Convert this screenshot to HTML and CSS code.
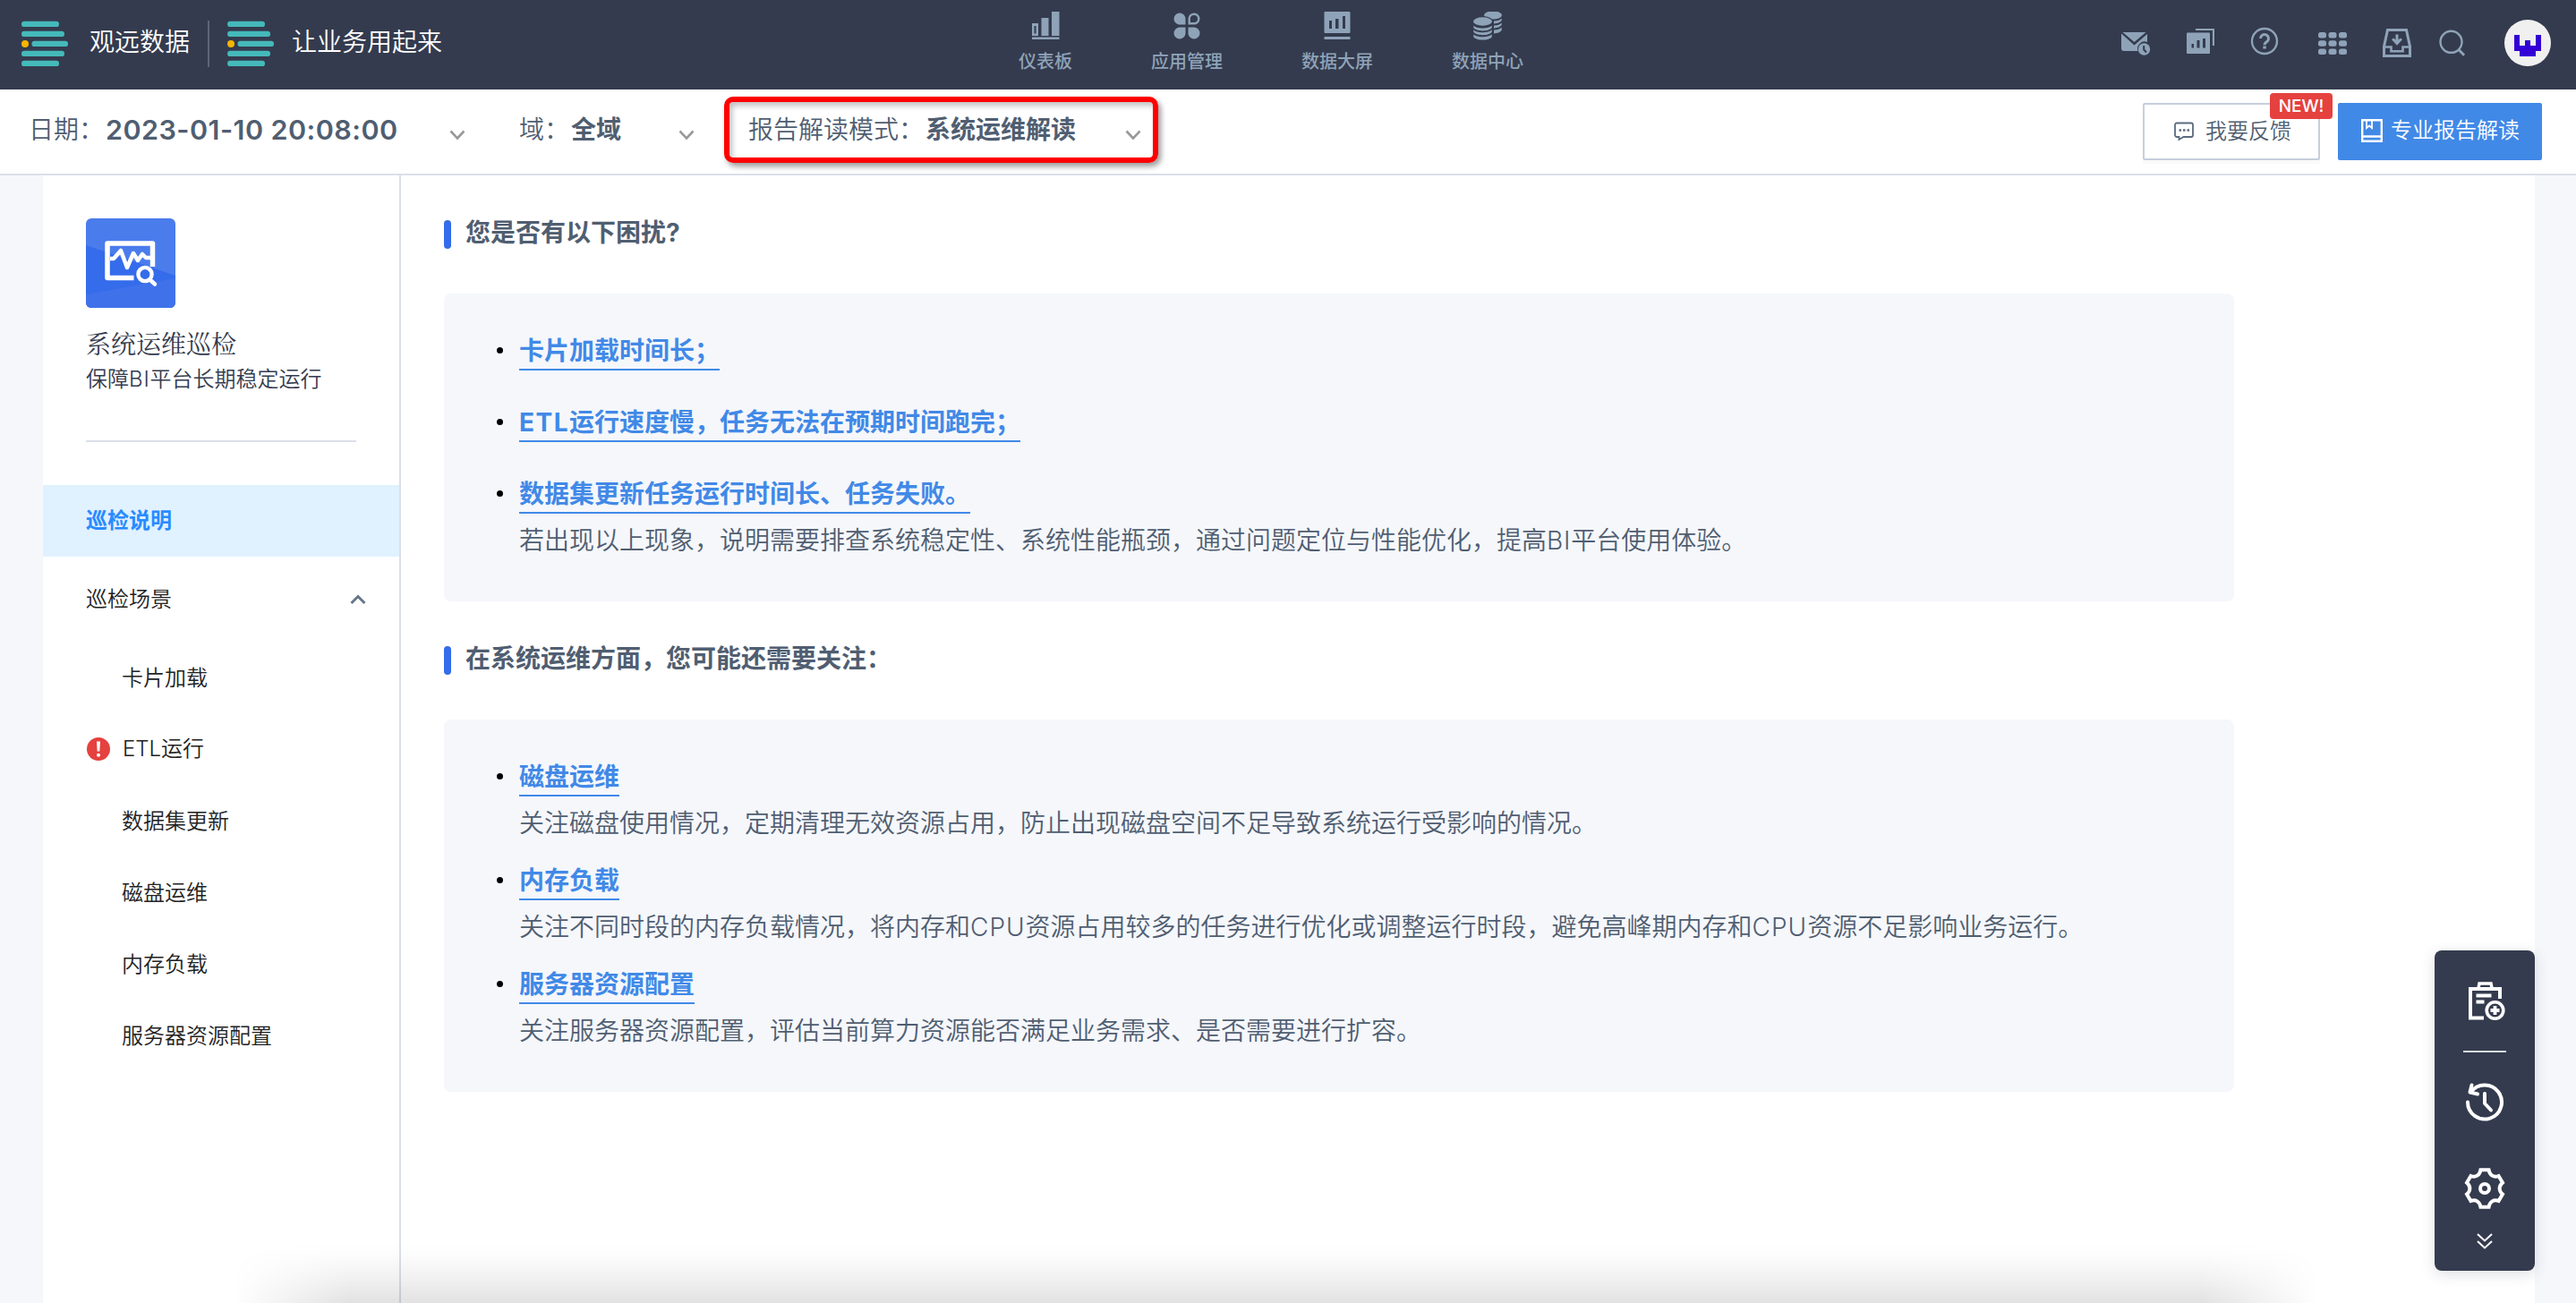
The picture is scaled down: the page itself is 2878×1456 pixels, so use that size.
FILE: index.html
```html
<!DOCTYPE html>
<html lang="zh-CN">
<head>
<meta charset="utf-8">
<title>系统运维巡检</title>
<link rel="stylesheet" href="styles.css">
</head>
<body>
<svg class="defs" width="0" height="0">
  <symbol id="logo" viewBox="0 0 52 52">
    <g fill="#45b9ba"><rect x="0" y="0.7" width="42" height="6.4" rx="3.2"/><rect x="0" y="11.7" width="48" height="6.4" rx="3.2"/><rect x="11.5" y="22.7" width="40.5" height="6.4" rx="3.2"/><rect x="0" y="33.7" width="48" height="6.4" rx="3.2"/><rect x="0" y="44.7" width="42" height="6.4" rx="3.2"/></g>
    <circle cx="4" cy="26" r="4" fill="#f7b500"/>
  </symbol>
  <symbol id="down" viewBox="0 0 18 12"><path d="M1.5 1.5 9 9.5 16.500 1.500" fill="none" stroke="#999" stroke-width="2.6"/></symbol>
</svg>

<header class="topbar">
  <div class="brand">
    <svg class="logo"><use href="#logo"/></svg>
    <span class="brand-name">观远数据</span>
    <i class="brand-line"></i>
    <svg class="logo"><use href="#logo"/></svg>
    <span class="slogan">让业务用起来</span>
  </div>
  <nav class="nav">
    <a class="nav-item">
      <svg width="32" height="32" viewBox="0 0 32 32" fill="#8fa3b8"><path fill-rule="evenodd" d="M1 13h7v14H1zM3.500 16v8.500h2V16z"/><path d="M11.500 7h8v20h-8zM23 0h8.500v27H23zM1 28.500h30.500v2.500H1z"/></svg>
      <span>仪表板</span></a>
    <a class="nav-item">
      <svg width="32" height="32" viewBox="0 0 32 32" fill="#8fa3b8"><path d="M14.500 14.500H7A6.500 6.500 0 1 1 14.500 7.500zM14.500 17.500v7A6.500 6.500 0 1 1 7.500 17.500zM17.500 17.500h7a6.500 6.500 0 1 1-7 7z"/><path d="M18.700 13.300V7.500a5.300 5.300 0 1 1 5.300 5.800z" fill="none" stroke="#8fa3b8" stroke-width="2.400"/></svg>
      <span>应用管理</span></a>
    <a class="nav-item">
      <svg width="32" height="32" viewBox="0 0 32 32" fill="#8fa3b8"><path fill-rule="evenodd" d="M2.500 0h27a1 1 0 0 1 1 1v22a1 1 0 0 1-1 1h-27a1 1 0 0 1-1-1V1a1 1 0 0 1 1-1zM7 10v9h3v-9zM14 8v11h3.500V8zM22 5v14h3V5z"/><path d="M1.500 28h29v3h-29z"/></svg>
      <span>数据大屏</span></a>
    <a class="nav-item">
      <svg width="32" height="32" viewBox="0 0 32 32" fill="#8fa3b8"><ellipse cx="22" cy="4" rx="10" ry="4.500"/><ellipse cx="10.500" cy="11" rx="11.500" ry="6" fill="#343b4e"/><ellipse cx="10.500" cy="11" rx="10.500" ry="4.700"/><path d="M.3 15.500c3 4 17 4 20.500 0v2.500c-3 4.500-17.500 4.500-20.500 0zM.3 20.300c3 4 17 4 20.500 0v2.500c-3 4.500-17.500 4.500-20.500 0zM.3 25.200c3 4 17 4 20.500 0v3c-3 4.500-17.500 4.500-20.500 0zM23 10.500q6 0 8.700-3v2.600q-2.500 3-8.700 3.500zM23 15.500q6 0 8.700-3v2.600q-2.500 3-8.700 3.500zM23 20.500q6 0 8.700-3v3.600q-2.500 3-8.700 3.500z"/></svg>
      <span>数据中心</span></a>
  </nav>
  <div class="tools">
    <svg class="t-mail" width="34" height="32" viewBox="0 0 34 32" fill="#8fa3b8"><path d="M2.500 3h26L15.500 14z"/><path d="M1 4.500 15.500 17.500 30 5v9a8 8 0 0 0-10.500 10H4a3 3 0 0 1-3-3z"/><circle cx="26.500" cy="22" r="6.700"/><path d="M26.200 18v4.500l2.800 3" fill="none" stroke="#343b4e" stroke-width="2"/></svg>
    <svg class="t-report" width="32" height="32" viewBox="0 0 32 32" fill="#8fa3b8"><path fill-rule="evenodd" d="M2 4.500h24a1 1 0 0 1 1 1V27a1 1 0 0 1-1 1H2a1 1 0 0 1-1-1V5.500a1 1 0 0 1 1-1zM6.500 17v4.500H9V17zM12.500 13v8.500h3V13zM19 11v10.500h3V11z"/><path d="M11 1h20v18" fill="none" stroke="#8fa3b8" stroke-width="2.200"/></svg>
    <svg class="t-help" width="32" height="32" viewBox="0 0 32 32" fill="none" stroke="#8fa3b8"><circle cx="16" cy="16" r="14" stroke-width="2.300"/><path d="M11.500 13a4.500 4.500 0 1 1 7.500 3.300q-3 2-3 4" stroke-width="3"/><path d="M14.300 21.500h3.500v3h-3.500z" fill="#8fa3b8" stroke="none"/></svg>
    <svg class="t-grid" width="32" height="26" viewBox="0 0 32 26" fill="#8fa3b8"><rect width="9" height="6.500" rx="2.500"/><rect x="11.500" width="9" height="6.500" rx="2.500"/><rect x="23" width="9" height="6.500" rx="2.500"/><rect y="9.200" width="9" height="6.500" rx="2.500"/><rect x="11.500" y="9.200" width="9" height="6.500" rx="2.500"/><rect x="23" y="9.200" width="9" height="6.500" rx="2.500"/><rect y="18.500" width="9" height="6.500" rx="2.500"/><rect x="11.500" y="18.500" width="9" height="6.500" rx="2.500"/><rect x="23" y="18.500" width="9" height="6.500" rx="2.500"/></svg>
    <svg class="t-inbox" width="32" height="32" viewBox="0 0 32 32" fill="none" stroke="#8fa3b8" stroke-width="3"><path d="M5.500 1.500h21L30.500 20v10.500h-29V20z"/><path d="M2 20.500h7.500v4.800h13v-4.800H30" stroke-width="2.600"/><path d="M16 6.500v9" /><path d="M10 12.300l6 6.400 6-6.400-2-1.800-4 3-4-3z" fill="#8fa3b8" stroke="none"/></svg>
    <svg class="t-search" width="30" height="30" viewBox="0 0 30 30" fill="none" stroke="#8fa3b8" stroke-width="2.400"><circle cx="13.500" cy="13.800" r="12"/><path d="M22 22.500l6 6.200" stroke-width="3"/></svg>
    <svg class="t-avatar" width="52" height="52" viewBox="0 0 52 52"><circle cx="26" cy="26" r="26" fill="#f0f0f0"/><path d="M11 17h6v12h6v-6h6v6h6V17h6v18h-6v6H17v-6h-6z" fill="#3400d6"/></svg>
  </div>
</header>

<section class="filters">
  <div class="filter f-date"><span>日期：</span><b class="date">2023-01-10 20:08:00</b><svg class="down"><use href="#down"/></svg></div>
  <div class="filter f-domain"><span>域：</span><b>全域</b><svg class="down"><use href="#down"/></svg></div>
  <div class="filter f-mode"><span>报告解读模式：</span><b>系统运维解读</b><svg class="down"><use href="#down"/></svg></div>
  <div class="actions">
    <button class="btn feedback">
      <svg width="22" height="22" viewBox="0 0 22 22" fill="none" stroke="#5b6b7f" stroke-width="1.800"><path d="M3 1.500h16a2 2 0 0 1 2 2V15a2 2 0 0 1-2 2h-8.500L5.500 20v-3H3a2 2 0 0 1-2-2V3.500a2 2 0 0 1 2-2z"/><path d="M5.500 9.500H8M10 9.500h2.500M14.500 9.500H17" stroke-width="2.500"/></svg>
      <span>我要反馈</span><em class="badge">NEW!</em></button>
    <button class="btn primary">
      <svg width="24" height="28" viewBox="0 0 24 28" fill="none" stroke="#fff" stroke-width="2.400"><path d="M1.200 2.200h21.600v23.600H1.200zM1.200 20.500h21.600"/><path d="M6 2.500v8.500l3-2.500 3 2.500V2.500" stroke-width="1.800"/></svg>
      <span>专业报告解读</span></button>
  </div>
</section>

<div class="page">
  <aside class="side">
    <svg class="app-icon" width="100" height="100" viewBox="0 0 100 100">
      <defs><clipPath id="r"><rect width="100" height="100" rx="6"/></clipPath></defs>
      <g clip-path="url(#r)"><rect width="100" height="100" fill="#4a7cec"/><path d="M0 30 100 64v36H0z" fill="#356ceb"/><path d="M0 85 100 67v33H0z" fill="#3f71ea"/></g>
      <g fill="none" stroke="#fff" stroke-linejoin="round"><path d="M74.500 54V28H24v38.500h29.500" stroke-width="5.500"/><path d="M27 45h4l8-9 7 19 7-16 5 8 5-7 4 4h5" stroke-width="4.500"/><circle cx="66" cy="62.500" r="7.600" stroke-width="4.300"/><path d="M72 69l5 4.500" stroke-width="4.500" stroke-linecap="round"/></g>
    </svg>
    <h1>系统运维巡检</h1>
    <p class="sub">保障<span class="bi">BI</span>平台长期稳定运行</p>
    <hr>
    <ul class="menu">
      <li class="active">巡检说明</li>
      <li class="group">巡检场景<svg width="18" height="12" viewBox="0 0 18 12"><path d="M1.500 10 9 2.500 16.500 10" fill="none" stroke="#66768a" stroke-width="3"/></svg></li>
      <li class="child">卡片加载</li>
      <li class="child warn"><svg width="26" height="26" viewBox="0 0 26 26"><circle cx="13" cy="13" r="13" fill="#e5413f"/><path d="M11 4.500h4l-.7 11h-2.600z" fill="#fff"/><circle cx="13" cy="19.800" r="2" fill="#fff"/></svg>ETL运行</li>
      <li class="child">数据集更新</li>
      <li class="child">磁盘运维</li>
      <li class="child">内存负载</li>
      <li class="child">服务器资源配置</li>
    </ul>
  </aside>
  <main class="content">
    <h2>您是否有以下困扰?</h2>
    <div class="panel loose">
      <ul>
        <li><a>卡片加载时间长；</a></li>
        <li><a><span class="etl">ETL</span>运行速度慢，任务无法在预期时间跑完；</a></li>
        <li><a>数据集更新任务运行时间长、任务失败。</a><p>若出现以上现象，说明需要排查系统稳定性、系统性能瓶颈，通过问题定位与性能优化，提高<span class="bi">BI</span>平台使用体验。</p></li>
      </ul>
    </div>
    <h2>在系统运维方面，您可能还需要关注：</h2>
    <div class="panel">
      <ul>
        <li><a>磁盘运维</a><p>关注磁盘使用情况，定期清理无效资源占用，防止出现磁盘空间不足导致系统运行受影响的情况。</p></li>
        <li><a>内存负载</a><p>关注不同时段的内存负载情况，将内存和<span class="latin">CPU</span>资源占用较多的任务进行优化或调整运行时段，避免高峰期内存和<span class="latin">CPU</span>资源不足影响业务运行。</p></li>
        <li><a>服务器资源配置</a><p>关注服务器资源配置，评估当前算力资源能否满足业务需求、是否需要进行扩容。</p></li>
      </ul>
    </div>
  </main>
</div>

<div class="bottom-shade"></div>
<div class="dock">
  <svg class="d-clip" width="42" height="46" viewBox="0 0 42 46" fill="none" stroke="#fff"><path d="M36 20V9H3v32.500h15" stroke-width="4"/><path d="M12 8l1-5h13l1 5" stroke-width="3.500"/><path d="M9.500 16.500h17M9.500 23.500h9" stroke-width="4"/><circle cx="30.500" cy="33" r="9.300" stroke-width="3.600"/><path d="M30.500 28v10M25.500 33h10" stroke-width="3.800"/></svg>
  <i class="dock-line"></i>
  <svg class="d-history" width="46" height="46" viewBox="0 0 46 46" fill="none" stroke="#fff" stroke-width="4" stroke-linecap="round" stroke-linejoin="round"><path d="M4 22.500A19 19 0 1 0 7.500 11.500"/><path d="M8.500 3.500 6.500 11.500l8.500 2" /><path d="M23 13v11l7 7.500"/></svg>
  <svg class="d-gear" width="46" height="48" viewBox="0 0 46 48" fill="none" stroke="#fff"><path d="M18.500 3.200h9c1 6 5.500 9 11 6.800l4.500 7.500c-4.500 4-4.500 9 0 13L38.500 38c-5.500-2.200-10 .8-11 6.800h-9c-1-6-5.500-9-11-6.800L3 30.500c4.500-4 4.500-9 0-13L7.500 10c5.500 2.200 10-.8 11-6.800z" stroke-width="4"/><circle cx="23" cy="24" r="5" stroke-width="4"/></svg>
  <svg class="d-more" width="18" height="20" viewBox="0 0 18 20" fill="none" stroke="#fff" stroke-width="2"><path d="M1 2l8 7.500L17 2M1 10l8 7.500 8-7.500"/></svg>
</div>
</body>
</html>
```

FILE: styles.css
```css
* { box-sizing: border-box; }
body {
  margin: 0;
  width: 2878px;
  height: 1456px;
  overflow: hidden;
  position: relative;
  display: flex;
  flex-direction: column;
  background: #f5f7fb;
  color: #505e71;
  font-family: Inter, "Noto Sans CJK SC", sans-serif;
}
svg { display: block; flex: none; }
.defs { position: absolute; }
h1, h2, p, ul { margin: 0; padding: 0; font-weight: 400; }
ul { list-style: none; }

.topbar {
  height: 100px;
  flex: none;
  background: #343b4e;
  display: grid;
  grid-template-columns: 1138px 1fr auto;
}
.brand { display: flex; align-items: center; padding: 0 0 4px 24px; color: #fff; font-size: 28px; font-weight: 350; line-height: 40px; }
.logo { width: 52px; height: 52px; }
.brand .logo { margin-top: 1px; }
.brand span { padding-bottom: 3px; }
.brand-name { margin-left: 24px; }
.brand-line { width: 2px; height: 52px; background: #5b6578; margin: 1px 20px 0; }
.slogan { margin-left: 20px; }
.nav { display: flex; gap: 88px; padding-top: 13px; }
.nav-item { display: flex; flex-direction: column; align-items: center; color: #8fa3b8; font-size: 20px; font-weight: 500; line-height: 28px; gap: 10px; }
.tools { display: flex; align-items: flex-start; padding-right: 28px; }
.t-mail { margin: 33px 39px 0 0; }
.t-report { margin: 32px 40px 0 0; }
.t-help { margin: 30px 44px 0 0; }
.t-grid { margin: 36px 40px 0 0; }
.t-inbox { margin: 32px 31px 0 0; }
.t-search { margin: 33px 43px 0 0; }
.t-avatar { margin-top: 22px; }

.filters {
  height: 96px;
  flex: none;
  background: #fff;
  border-bottom: 2px solid #dbdfe8;
  display: flex;
  align-items: flex-start;
  padding: 8px 38px 0 32px;
  font-size: 28px;
  line-height: 40px;
}
.filter { display: flex; align-items: center; height: 74px; white-space: nowrap; }
.filter > span { font-weight: 350; }
.filter b { font-weight: 700; }
.filter .down { width: 18px; height: 12px; margin: 11px 0 0 auto; }
.filter .date { font-size: 30.500px; font-weight: 600; letter-spacing: .45px; margin: -1px 0 0 2px; }
.f-date { width: 488px; }
.f-domain { width: 196px; margin-left: 60px; }
.f-domain b { margin-left: 2px; }
.f-mode {
  width: 485px;
  margin-left: 33px;
  padding: 0 13px 0 21px;
  border: 6px solid #fe0000;
  border-radius: 10px;
  box-shadow: 3px 4px 6px rgba(0,0,0,.4), inset 3px 4px 6px rgba(0,0,0,.25);
}
.f-mode b { margin-left: 2px; }
.actions { display: flex; gap: 20px; margin: 7px 0 0 auto; }
.btn {
  font: 350 24px/34px Inter, "Noto Sans CJK SC", sans-serif;
  height: 64px;
  display: flex;
  align-items: center;
  border-radius: 2px;
  position: relative;
  white-space: nowrap;
}
.feedback { width: 198px; padding: 0 0 0 33px; gap: 13px; border: 2px solid #c6cedb; background: #fff; color: #505e71; box-shadow: 0 4px 0 #fafafb; }
.badge { position: absolute; left: 140px; top: -13px; width: 70px; height: 29px; border-radius: 4px; background: #e5413f; color: #fff; font: 500 19px/29px Inter, sans-serif; text-align: center; }
.primary { width: 228px; padding: 0 0 2px 26px; gap: 9px; border: 0; background: #4189e7; color: #fff; }

.page { flex: 1; margin: 0 46px 0 48px; background: #fff; display: flex; }
.side { width: 400px; border-right: 2px solid #dbdfe8; padding-top: 48px; color: #343b4e; }
.app-icon { margin-left: 48px; }
.side h1 { font: 400 28px/40px "Noto Serif CJK SC", "Noto Serif SC", "Liberation Serif", "Noto Sans CJK SC", serif; margin: 19px 0 0 48px; }
.sub { font-size: 24px; font-weight: 350; line-height: 36px; margin: 3px 0 0 48px; }
.side hr { border: 0; height: 2px; background: #dbdfe8; margin: 50px 48px 48px; }
.menu { font-size: 24px; font-weight: 350; color: #222; line-height: 80px; }
.menu li { height: 80px; padding-left: 48px; }
.menu .active { background: #e0f1ff; color: #2a8bff; font-weight: 700; }
.menu .group { height: 96px; line-height: 96px; display: flex; justify-content: space-between; align-items: center; padding-right: 37px; }
.menu .child { padding-left: 88px; }
.menu .warn { display: flex; align-items: center; gap: 14px; padding: 0 0 2px 49px; }

.content { width: 2048px; padding: 39px 0 0 48px; }
h2 { height: 48px; display: flex; align-items: center; font-size: 28px; font-weight: 700; line-height: 40px; padding-top: 2px; }
h2::before { content: ""; width: 8px; height: 32px; border-radius: 4px; background: #356ceb; margin: 4px 16px 0 0; }
.panel { height: 416px; margin-top: 45px; background: #f5f7fb; border-radius: 8px; padding: 42px 0 0 84px; font-size: 28px; line-height: 40px; white-space: nowrap; }
.panel.loose { height: 344px; margin-bottom: 39px; }
.panel li { height: 116px; position: relative; }
.loose li { height: 80px; }
.panel li::before { content: ""; position: absolute; left: -25px; top: 18px; width: 7px; height: 7px; border-radius: 50%; background: #000; }
.panel a { display: inline-block; height: 44px; line-height: 45px; border-bottom: 2px solid #4189e7; color: #4189e7; font-weight: 700; vertical-align: top; }
.etl { letter-spacing: 1.500px; }
.latin { letter-spacing: 1px; }
.bi { letter-spacing: .8px; }
.panel p { font-weight: 350; margin-top: 10px; }

.bottom-shade {
  position: absolute;
  left: 260px;
  bottom: 0;
  width: 2330px;
  height: 66px;
  background: linear-gradient(to top, rgba(0,0,0,.115), rgba(0,0,0,.05) 45%, rgba(0,0,0,.01) 80%, transparent);
  -webkit-mask-image: linear-gradient(to right, transparent, #000 130px, #000 2200px, transparent);
  mask-image: linear-gradient(to right, transparent, #000 130px, #000 2200px, transparent);
}
.dock {
  position: absolute;
  left: 2720px;
  top: 1062px;
  width: 112px;
  height: 358px;
  border-radius: 8px;
  background: #343b4e;
  box-shadow: 0 4px 16px rgba(52,59,78,.16);
  display: flex;
  flex-direction: column;
  align-items: center;
}
.d-clip { margin: 34px 0 32px 3px; }
.dock-line { width: 48px; height: 2px; background: #d5dde6; }
.d-history { margin-top: 33px; }
.d-gear { margin-top: 49px; }
.d-more { margin-top: 25px; }
```
